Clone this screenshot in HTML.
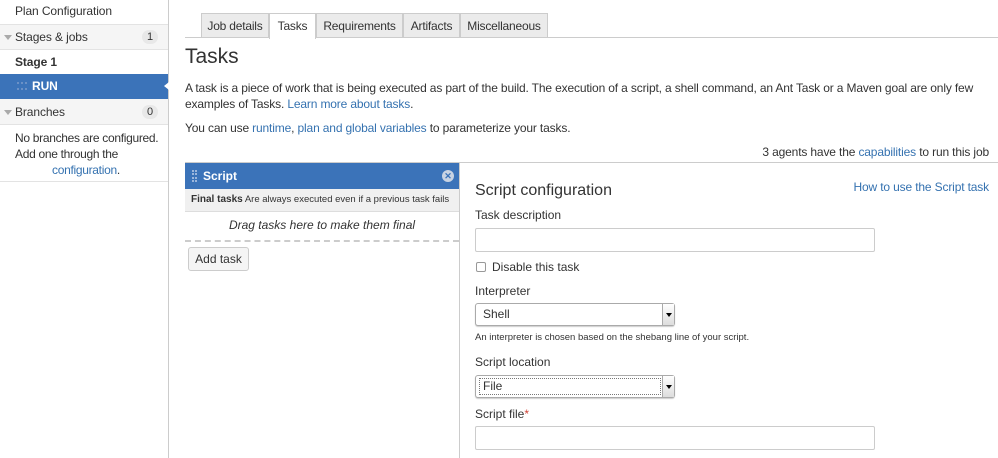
<!DOCTYPE html>
<html><head><style>
*{box-sizing:border-box;margin:0;padding:0}
body{width:998px;height:458px;overflow:hidden;background:#fff;font-family:"Liberation Sans",Arial,sans-serif;font-size:12px;color:#333;position:relative}
a{color:#3572b0;text-decoration:none}
.abs{position:absolute;white-space:nowrap}
.side{left:0;top:0;width:169px;height:458px;border-right:1px solid #ccc;background:#fff}
.row{position:absolute;left:0;width:168px;border-bottom:1px solid #e3e3e3;padding-left:15px;line-height:24px;font-size:12px;white-space:nowrap;letter-spacing:-0.1px}
.badge{position:absolute;right:10px;top:5px;background:#e8e8e8;border-radius:8px;font-size:11px;line-height:14px;padding:0 5px}
.tri{position:absolute;left:4px;top:10px;border-left:4px solid transparent;border-right:4px solid transparent;border-top:5px solid #aaa}
.tab{position:absolute;top:13px;height:25px;border:1px solid #ccc;border-bottom:none;background:#ebebeb;font-size:12px;line-height:24px;text-align:center;letter-spacing:-0.2px}
input.t{position:absolute;height:24px;border:1px solid #ccc;border-radius:2px;background:#fff}
.sel{position:absolute;height:23px;border:1px solid #aaa;border-radius:3px;background:#fff;font-size:12px;line-height:21px;padding-left:7px;box-shadow:0 1px 1px #ccc}
.sel .ar{position:absolute;right:0;top:0;width:12px;height:21px;border-left:1px solid #aaa;background:linear-gradient(#fff,#ddd)}
.sel .ar:after{content:"";position:absolute;left:3px;top:9px;border-left:3px solid transparent;border-right:3px solid transparent;border-top:4px solid #000}
</style></head><body>
<div class="abs side">
 <div class="row" style="top:0;height:25px;line-height:22px">Plan Configuration</div>
 <div class="row" style="top:25px;height:25px;background:#f5f5f5"><span class="tri"></span>Stages &amp; jobs<span class="badge">1</span></div>
 <div class="row" style="top:50px;height:24px;font-weight:bold;border:none">Stage 1</div>
 <div class="row" style="top:74px;height:25px;background:#3b73b9;color:#fff;font-weight:bold;padding-left:32px;border:none">RUN
  <span style="position:absolute;left:17px;top:8px;width:10px;height:8px;border-top:2px dotted #6b91c6;border-bottom:2px dotted #6b91c6"></span>
  <span style="position:absolute;right:-1px;top:8px;border-right:5px solid #fff;border-top:4px solid transparent;border-bottom:4px solid transparent"></span></div>
 <div class="row" style="top:99px;height:26px;background:#f5f5f5;line-height:26px"><span class="tri" style="top:11px"></span>Branches<span class="badge" style="top:6px">0</span></div>
 <div class="row" style="top:125px;height:57px;line-height:16px;padding-top:5px;letter-spacing:-0.3px">No branches are configured.<br>Add one through the<br><span style="padding-left:37px"><a>configuration</a>.</span></div>
</div>

<div class="tab" style="left:201px;width:68px">Job details</div>
<div class="tab" style="left:269px;width:47px;background:#fff;height:26px;z-index:2">Tasks</div>
<div class="tab" style="left:316px;width:87px">Requirements</div>
<div class="tab" style="left:403px;width:57px">Artifacts</div>
<div class="tab" style="left:460px;width:88px">Miscellaneous</div>
<div class="abs" style="left:185px;top:37px;width:813px;border-top:1px solid #ccc"></div>

<div class="abs" style="left:185px;top:45px;font-size:21px;color:#333">Tasks</div>
<div class="abs" style="left:185px;top:80px;width:805px;line-height:16px;white-space:normal;letter-spacing:-0.15px">A task is a piece of work that is being executed as part of the build. The execution of a script, a shell command, an Ant Task or a Maven goal are only few examples of Tasks. <a>Learn more about tasks</a>.</div>
<div class="abs" style="left:185px;top:121px;letter-spacing:-0.15px">You can use <a>runtime</a>, <a>plan and global variables</a> to parameterize your tasks.</div>
<div class="abs" style="right:9px;top:145px;letter-spacing:-0.15px">3 agents have the <a>capabilities</a> to run this job</div>
<div class="abs" style="left:185px;top:162px;width:813px;border-top:1px solid #ccc"></div>

<div class="abs" style="left:185px;top:163px;width:274px;height:26px;background:#3b73b9;color:#fff;font-weight:bold;line-height:26px;padding-left:18px">Script
 <span style="position:absolute;left:7px;top:7px;width:5px;height:12px;border-left:2px dotted #9bb6dc;border-right:2px dotted #9bb6dc"></span>
 <span style="position:absolute;right:5px;top:7px;width:12px;height:12px;border-radius:6px;background:#c8d3e3;color:#3b73b9;font-size:9px;line-height:12px;text-align:center">✕</span></div>
<div class="abs" style="left:185px;top:189px;width:274px;height:23px;background:#f0f0f0;border-bottom:1px solid #ddd;font-size:9.5px;line-height:22px;padding-left:6px"><b style="font-size:10px">Final tasks</b> Are always executed even if a previous task fails</div>
<div class="abs" style="left:185px;top:218px;width:274px;text-align:center;font-style:italic">Drag tasks here to make them final</div>
<div class="abs" style="left:185px;top:240px;width:274px;border-top:2px dashed #ccc"></div>
<div class="abs" style="left:188px;top:247px;width:61px;height:24px;border:1px solid #ccc;border-radius:3px;background:#f5f5f5;line-height:22px;text-align:center">Add task</div>

<div class="abs" style="left:459px;top:163px;height:295px;border-left:1px solid #ccc"></div>
<div class="abs" style="left:475px;top:182px;font-size:16px">Script configuration</div>
<div class="abs" style="right:9px;top:180px;letter-spacing:-0.15px"><a>How to use the Script task</a></div>
<div class="abs" style="left:475px;top:208px">Task description</div>
<input class="t" style="left:475px;top:228px;width:400px">
<div class="abs" style="left:476px;top:262px;width:10px;height:10px;border:1px solid #999;border-radius:2px"></div>
<div class="abs" style="left:492px;top:260px">Disable this task</div>
<div class="abs" style="left:475px;top:284px">Interpreter</div>
<div class="sel" style="left:475px;top:303px;width:200px">Shell<span class="ar"></span></div>
<div class="abs" style="left:475px;top:332px;font-size:9.5px">An interpreter is chosen based on the shebang line of your script.</div>
<div class="abs" style="left:475px;top:355px">Script location</div>
<div class="sel" style="left:475px;top:375px;width:200px;padding-left:3px"><span style="display:inline-block;width:182px;border:1px dotted #777;line-height:15px;padding-left:3px;margin-top:2px">File</span><span class="ar"></span></div>
<div class="abs" style="left:475px;top:407px">Script file<span style="color:#d04437">*</span></div>
<input class="t" style="left:475px;top:426px;width:400px">
</body></html>
